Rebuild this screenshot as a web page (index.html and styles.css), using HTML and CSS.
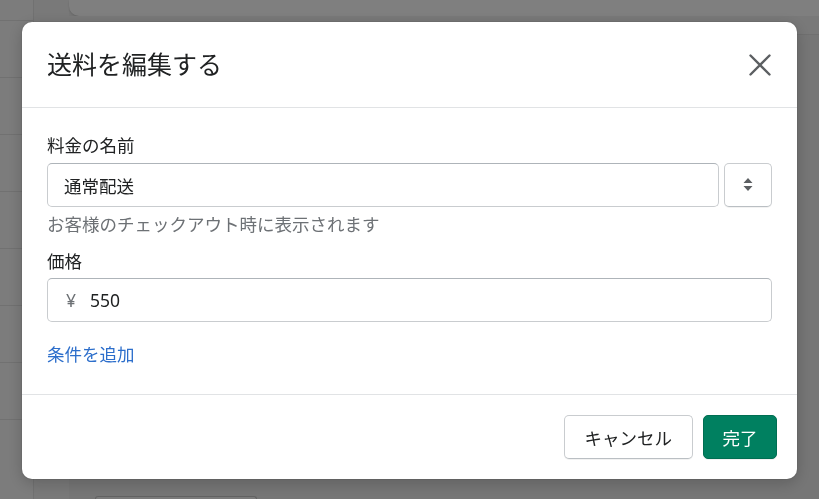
FILE: index.html
```html
<!DOCTYPE html>
<html lang="ja">
<head>
    <meta charset="UTF-8">
    <meta name="viewport" content="width=device-width, initial-scale=1.0">
    <title>送料を編集する</title>
    <link rel="stylesheet" href="styles.css">
</head>
<body>
    <div class="page">
        <div class="side-nav">
            <div class="nav-row"></div>
            <div class="nav-row"></div>
            <div class="nav-row"></div>
            <div class="nav-row"></div>
            <div class="nav-row"></div>
            <div class="nav-row"></div>
            <div class="nav-row"></div>
            <div class="nav-row"></div>
        </div>
        <div class="gutter"></div>
        <div class="content">
            <div class="top-card"></div>
            <div class="top-band"></div>
            <div class="content-fill"></div>
            <div class="ghost-button"></div>
        </div>
    </div>

    <div class="overlay">
        <div class="modal">
            <div class="modal-header">
                <h2 class="modal-title">送料を編集する</h2>
                <button class="close-button" aria-label="閉じる">
                    <svg width="22" height="22" viewBox="0 0 22 22">
                        <path d="M1.5 1.5 L20.5 20.5 M20.5 1.5 L1.5 20.5" stroke="#5c5f62" stroke-width="2.4" stroke-linecap="round" fill="none"/>
                    </svg>
                </button>
            </div>

            <div class="modal-body">
                <label class="field-label" for="rate-name">料金の名前</label>
                <div class="input-row">
                    <div class="text-input grow">
                        <span id="rate-name">通常配送</span>
                    </div>
                    <button class="select-button" aria-label="選択">
                        <svg width="10" height="14" viewBox="0 0 10 14">
                            <path d="M5 0 L9.5 5 L0.5 5 Z M0.5 8 L9.5 8 L5 13 Z" fill="#5c5f62"/>
                        </svg>
                    </button>
                </div>
                <p class="help-text">お客様のチェックアウト時に表示されます</p>

                <label class="field-label second" for="rate-price">価格</label>
                <div class="text-input">
                    <span class="prefix">¥</span>
                    <span id="rate-price">550</span>
                </div>

                <a class="add-link" href="#">条件を追加</a>
            </div>

            <div class="modal-footer">
                <button class="btn">キャンセル</button>
                <button class="btn btn-primary">完了</button>
            </div>
        </div>
    </div>
</body>
</html>
```

FILE: styles.css
```css
* {
    box-sizing: border-box;
}

body {
    margin: 0;
    font-family: "Noto Sans", "Noto Sans CJK JP", sans-serif;
    color: #202223;
    background-color: #efefef;
    height: 100vh;
    overflow: hidden;
}

/* page behind the modal */
.page {
    display: flex;
    height: 100%;
}

.side-nav {
    width: 34px;
    background-color: #f8f8f8;
    border-right: 1px solid #e3e3e3;
    padding-top: 20px;
    overflow: hidden;
}

.nav-row {
    height: 57px;
    border-top: 1px solid #e3e3e3;
}

.gutter {
    width: 35px;
    background-color: #f3f3f3;
}

.content {
    flex: 1;
    display: flex;
    flex-direction: column;
    background-color: #ececec;
}

.top-card {
    height: 16px;
    background-color: #ffffff;
    border-bottom-left-radius: 10px;
    box-shadow: 0 1px 2px rgba(0, 0, 0, 0.15);
}

.top-band {
    height: 19px;
    border-bottom: 1px solid #e0e0e0;
    background-color: #f2f2f2;
}

.content-fill {
    flex: 1;
}

.ghost-button {
    width: 162px;
    height: 3px;
    margin-left: 26px;
    border: 1px solid #c4c4c4;
    border-bottom: none;
    border-radius: 5px 5px 0 0;
    background-color: #f7f7f7;
}

/* modal */
.overlay {
    position: fixed;
    inset: 0;
    background-color: rgba(0, 0, 0, 0.5);
    padding: 22px;
}

.modal {
    width: 775px;
    background-color: #ffffff;
    border-radius: 10px;
    box-shadow: 0 0 0 1px rgba(0, 0, 0, 0.05), 0 4px 16px rgba(0, 0, 0, 0.2);
}

.modal-header {
    display: flex;
    justify-content: space-between;
    align-items: center;
    padding: 25px 25px 25px 25px;
    border-bottom: 1px solid #e1e3e5;
}

.modal-title {
    margin: 0;
    font-size: 25px;
    line-height: 35px;
    font-weight: 400;
    color: #202223;
}

.close-button {
    border: none;
    background: none;
    padding: 0;
    margin-right: 1px;
    display: flex;
    cursor: pointer;
}

.modal-body {
    padding: 25px 25px 27px 25px;
    display: flex;
    flex-direction: column;
    align-items: stretch;
}

.field-label {
    font-size: 17.5px;
    line-height: 25px;
    margin-bottom: 5px;
}

.field-label.second {
    margin-top: 12px;
    margin-bottom: 4px;
}

.input-row {
    display: flex;
    gap: 5px;
}

.text-input {
    height: 44px;
    display: flex;
    align-items: center;
    padding: 0 16px;
    border: 1px solid #c9cccf;
    border-top-color: #aeb4b9;
    border-radius: 5px;
    font-size: 17.5px;
    color: #202223;
}

.text-input.grow {
    flex: 1;
}

.prefix {
    color: #6d7175;
    margin-left: 2px;
    margin-right: 14px;
}

.select-button {
    width: 48px;
    height: 44px;
    display: flex;
    align-items: center;
    justify-content: center;
    background-color: #ffffff;
    border: 1px solid #c9cccf;
    border-bottom-color: #babfc3;
    border-radius: 5px;
    box-shadow: 0 1px 0 rgba(0, 0, 0, 0.05);
    padding: 0;
}

.help-text {
    margin: 5px 0 0 0;
    font-size: 17.5px;
    line-height: 25px;
    color: #6d7175;
}

.add-link {
    align-self: flex-start;
    margin-top: 20px;
    font-size: 17.5px;
    line-height: 25px;
    color: #2c6ecb;
    text-decoration: none;
}

.modal-footer {
    display: flex;
    justify-content: flex-end;
    gap: 10px;
    padding: 20px 20px 20px 20px;
    border-top: 1px solid #e1e3e5;
}

.btn {
    height: 44px;
    padding: 0 20px;
    font-family: inherit;
    font-size: 17.5px;
    color: #202223;
    background-color: #ffffff;
    border: 1px solid #c9cccf;
    border-bottom-color: #babfc3;
    border-radius: 5px;
    box-shadow: 0 1px 0 rgba(0, 0, 0, 0.05);
    cursor: pointer;
}

.btn-primary {
    padding: 0 18.5px;
    color: #ffffff;
    background-color: #008060;
    border-color: #006e52;
}
```
